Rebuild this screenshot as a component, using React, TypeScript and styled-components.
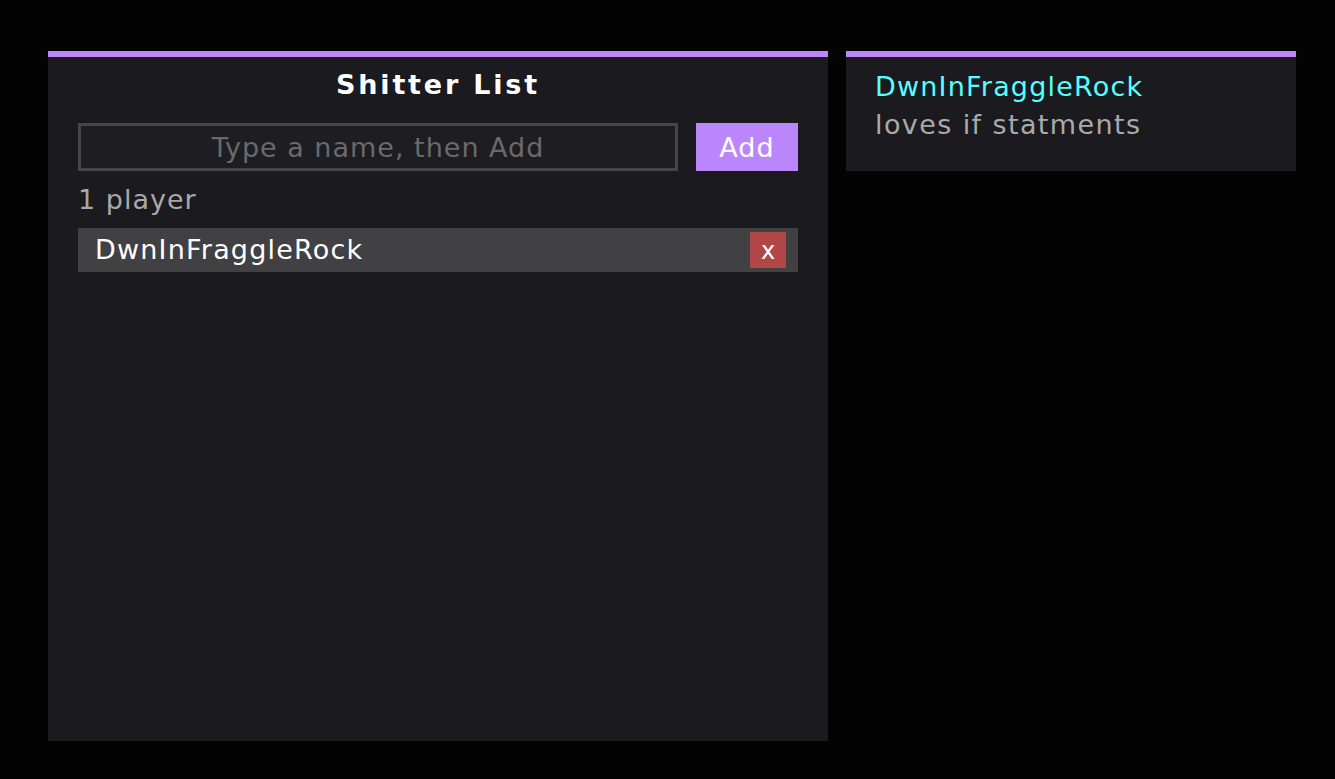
import React, { useState } from 'react';
import styled, { createGlobalStyle } from 'styled-components';

const purple = '#bb86fc';
const panelBg = '#1b1a1f';
const font = "'DejaVu Sans', Verdana, sans-serif";

const GlobalStyle = createGlobalStyle`
  html, body {
    margin: 0;
    padding: 0;
    background: #030304;
    height: 100%;
  }
  body {
    font-family: ${font};
    -webkit-font-smoothing: none;
  }
  * {
    box-sizing: border-box;
  }
`;

interface Player {
  name: string;
  note: string;
}

const App: React.FunctionComponent = () => {
  const [players, setPlayers] = useState<Player[]>([
    { name: 'DwnInFraggleRock', note: 'loves if statments' },
  ]);
  const [draft, setDraft] = useState('');

  const add = () => {
    const name = draft.trim();
    if (!name) return;
    setPlayers([...players, { name, note: '' }]);
    setDraft('');
  };

  const remove = (name: string) => {
    setPlayers(players.filter((p) => p.name !== name));
  };

  return (
    <>
      <GlobalStyle />
      <Screen>
        <ListPanel>
          <Title>Shitter List</Title>
          <AddRow>
            <NameInput
              value={draft}
              placeholder="Type a name, then Add"
              onChange={(e) => setDraft(e.target.value)}
              onKeyDown={(e) => e.key === 'Enter' && add()}
            />
            <AddButton onClick={add}>Add</AddButton>
          </AddRow>
          <Count>
            {players.length} {players.length === 1 ? 'player' : 'players'}
          </Count>
          <Entries>
            {players.map((p) => (
              <Entry key={p.name}>
                <EntryName>{p.name}</EntryName>
                <RemoveButton onClick={() => remove(p.name)}>x</RemoveButton>
              </Entry>
            ))}
          </Entries>
        </ListPanel>
        {players[0] && (
          <DetailPanel>
            <DetailName>{players[0].name}</DetailName>
            <DetailNote>{players[0].note}</DetailNote>
          </DetailPanel>
        )}
      </Screen>
    </>
  );
};

const Screen = styled.div`
  display: flex;
  align-items: flex-start;
  gap: 18px;
  padding: 51px 0 0 48px;
  min-height: 779px;
  background: #030304;
`;

const Panel = styled.div`
  background: ${panelBg};
  border-top: 6px solid ${purple};
`;

const ListPanel = styled(Panel)`
  width: 780px;
  height: 690px;
  padding: 10px 30px 0;
  display: flex;
  flex-direction: column;
`;

const Title = styled.div`
  font-family: ${font};
  font-weight: bold;
  font-size: 27px;
  letter-spacing: 2.8px;
  line-height: 36px;
  color: #ffffff;
  text-align: center;
  margin-bottom: 20px;
`;

const AddRow = styled.div`
  display: flex;
  gap: 18px;
  height: 48px;
`;

const NameInput = styled.input`
  flex: 1;
  height: 48px;
  background: #1e1d22;
  border: 3px solid #464648;
  color: #ffffff;
  font-family: ${font};
  font-size: 27px;
  letter-spacing: 1px;
  text-align: center;
  outline: none;
  padding: 0 10px;

  &::placeholder {
    color: #6a6a6c;
  }
`;

const AddButton = styled.button`
  width: 102px;
  height: 48px;
  background: ${purple};
  border: none;
  color: #ffffff;
  font-family: ${font};
  font-size: 27px;
  letter-spacing: 1px;
  cursor: pointer;
  padding: 0;
`;

const Count = styled.div`
  font-family: ${font};
  font-size: 27px;
  letter-spacing: 1px;
  color: #a8a8a8;
  line-height: 30px;
  margin: 14px 0 13px;
`;

const Entries = styled.div`
  display: flex;
  flex-direction: column;
  gap: 6px;
`;

const Entry = styled.div`
  display: flex;
  align-items: center;
  justify-content: space-between;
  height: 44px;
  background: #414143;
  padding: 0 12px 0 17px;
`;

const EntryName = styled.span`
  font-family: ${font};
  font-size: 27px;
  letter-spacing: 1.2px;
  color: #ffffff;
  line-height: 44px;
`;

const RemoveButton = styled.button`
  width: 36px;
  height: 36px;
  background: #b04646;
  border: none;
  color: #ffffff;
  font-family: ${font};
  font-size: 24px;
  line-height: 30px;
  padding: 2px 0 0;
  cursor: pointer;
`;

const DetailPanel = styled(Panel)`
  width: 450px;
  height: 120px;
  padding: 11px 29px 0;
`;

const DetailName = styled.div`
  font-family: ${font};
  font-size: 27px;
  letter-spacing: 1.2px;
  line-height: 38px;
  color: #55ffff;
`;

const DetailNote = styled.div`
  font-family: ${font};
  font-size: 27px;
  letter-spacing: 1.4px;
  line-height: 38px;
  color: #aaaaaa;
`;

export default App;
